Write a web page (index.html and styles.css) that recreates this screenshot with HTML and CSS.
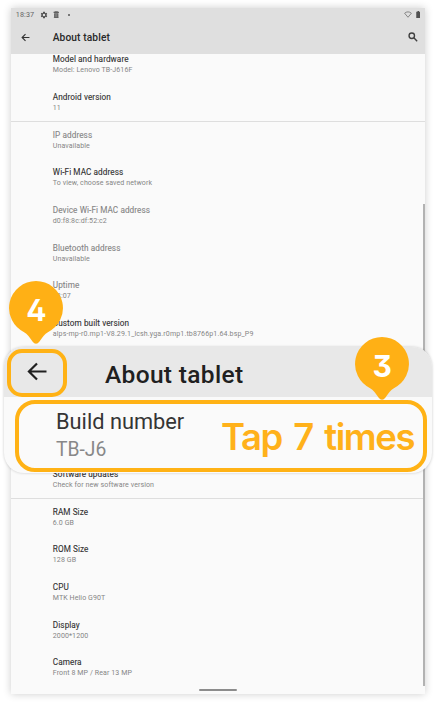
FILE: index.html
```html
<!DOCTYPE html>
<html lang="en">
<head>
<meta charset="utf-8">
<title>About tablet</title>
<link rel="stylesheet" href="styles.css">
</head>
<body>
<main class="screen">
  <header class="top">
    <div class="status">
      <span class="time">18:37</span>
      <svg class="gear" viewBox="0 0 24 24"><path fill-rule="evenodd" d="M19.4 13a7.500 7.500 0 0 0 0-2l2.300-1.700-2.200-3.800-2.700 1a7.500 7.500 0 0 0-1.700-1L14.700 2.500H9.300l-.4 3a7.500 7.500 0 0 0-1.700 1l-2.700-1-2.200 3.800L4.600 11a7.500 7.500 0 0 0 0 2l-2.300 1.700 2.200 3.800 2.700-1a7.500 7.500 0 0 0 1.700 1l.4 3h5.400l.4-3a7.500 7.500 0 0 0 1.700-1l2.700 1 2.200-3.800zM12 15.700a3.700 3.700 0 1 1 0-7.400 3.700 3.700 0 0 1 0 7.400z"/></svg>
      <svg class="sim" viewBox="0 0 12 14"><path d="M1 1.500h2V.5h6v1h2v2H1zM2 4h8v8.500h1V14H1v-1.500h1z"/><path class="slots" d="M4 6.500h4M4 8.500h4M4 10.500h4"/></svg>
      <i class="dot"></i>
      <svg class="wifi" viewBox="0 0 16 14"><path d="M1.200 4.500C5 .8 11 .8 14.800 4.500L8 12.500z"/></svg>
      <svg class="battery" viewBox="0 0 8 14"><path d="M2.500 0h3v1.500H8V14H0V1.500h2.500z"/></svg>
    </div>
    <div class="bar">
      <svg class="back" viewBox="0 0 16 16"><path d="M15 8H2M8 2L2 8l6 6"/></svg>
      <h1>About tablet</h1>
      <svg class="search" viewBox="0 0 18 18"><circle cx="6.800" cy="6.800" r="4.900"/><path d="M10.500 10.500l6 6"/></svg>
    </div>
  </header>
  <section class="list">
    <div class="row"><b>Model and hardware</b><span>Model: Lenovo TB-J616F</span></div>
    <div class="row"><b>Android version</b><span>11</span></div>
    <div class="row off line"><b>IP address</b><span>Unavailable</span></div>
    <div class="row"><b>Wi-Fi MAC address</b><span>To view, choose saved network</span></div>
    <div class="row off"><b>Device Wi-Fi MAC address</b><span>d0:f8:8c:df:52:c2</span></div>
    <div class="row off"><b>Bluetooth address</b><span>Unavailable</span></div>
    <div class="row off"><b>Uptime</b><span>03:07</span></div>
    <div class="row"><b>Custom built version</b><span class="long">alps-mp-r0.mp1-V8.29.1_lcsh.yga.r0mp1.tb8766p1.64.bsp_P9</span></div>
    <div class="row after"><b>Software updates</b><span>Check for new software version</span></div>
    <div class="row line"><b>RAM Size</b><span>6.0 GB</span></div>
    <div class="row"><b>ROM Size</b><span>128 GB</span></div>
    <div class="row"><b>CPU</b><span>MTK Helio G90T</span></div>
    <div class="row"><b>Display</b><span>2000*1200</span></div>
    <div class="row"><b>Camera</b><span>Front 8 MP / Rear 13 MP</span></div>
  </section>
  <i class="scroll"></i>
  <i class="home"></i>
</main>
<aside class="callout">
  <div class="chead">
    <div class="key"><svg viewBox="0 0 21 20"><path d="M20.500 10H2M10.500 1.500L2 10l8.500 8.500"/></svg></div>
    <h2>About tablet</h2>
  </div>
  <div class="cbody">
    <div class="names"><strong>Build number</strong><span>TB-J6</span></div>
    <div class="tap">Tap 7 times</div>
  </div>
</aside>
<div class="pin four"><svg viewBox="0 0 54 64"><path d="M27 0a27 27 0 0 1 11.500 51.400Q35 53.500 30.500 60.500Q27 65 23.500 60.500Q19 53.500 15.500 51.400A27 27 0 0 1 27 0z"/></svg><span>4</span></div>
<div class="pin three"><svg viewBox="0 0 54 64"><path d="M27 0a27 27 0 0 1 11.500 51.400Q35 53.500 30.500 60.500Q27 65 23.500 60.500Q19 53.500 15.500 51.400A27 27 0 0 1 27 0z"/></svg><span>3</span></div>
</body>
</html>
```
FILE: styles.css
```css
* { box-sizing: border-box; }
body { margin: 0; width: 436px; height: 712px; overflow: hidden; position: relative; background: #fff; font-family: Roboto, sans-serif; }
h1, h2 { margin: 0; font-weight: 500; white-space: nowrap; }
svg { display: block; flex: none; }
.screen { position: relative; margin: 8px 0 0 11.300px; width: 414px; height: 686px; background: #fafafa; box-shadow: 0 0 8px rgba(0,0,0,.2); }
.top { height: 46px; background: #dfdfdf; }
.status { height: 13px; display: flex; align-items: center; padding: 0 5px 0 4.500px; }
.time { font-size: 7.200px; color: #666; width: 24px; letter-spacing: .1px; }
.gear { width: 8px; height: 8px; fill: #505050; margin-left: .7px; }
.sim { width: 6.500px; height: 7.500px; fill: #606060; margin-left: 5px; }
.slots { stroke: #aaa; stroke-width: .8; }
.dot { width: 2px; height: 2px; border-radius: 50%; background: #555; margin-left: 8px; }
.wifi { width: 8px; height: 7px; fill: none; stroke: #777; stroke-width: 1.700; margin-left: auto; }
.battery { width: 4.500px; height: 7px; fill: #505050; margin-left: 3.500px; }
.bar { height: 32px; display: flex; align-items: center; padding: 0 7.500px 0 10.200px; }
.back { width: 9px; height: 9px; fill: none; stroke: #333; stroke-width: 2; }
.bar h1 { font-size: 10.200px; letter-spacing: .12px; color: #282828; margin-left: 22.200px; }
.search { width: 10px; height: 10px; margin-left: auto; fill: none; stroke: #404040; stroke-width: 2.500; }
.list { margin-top: -8.700px; }
.row { height: 37.700px; padding: 8px 0 0 41.500px; border-top: 1px solid transparent; white-space: nowrap; display: flex; flex-direction: column; }
.row.line { border-top-color: #dedede; }
.row b { font-size: 8.200px; line-height: 11px; font-weight: 400; letter-spacing: .08px; color: #303030; -webkit-text-stroke: .1px currentColor; }
.row span { font-size: 7.050px; line-height: 10.300px; letter-spacing: .09px; color: #858585; }
.row .long { letter-spacing: .13px; }
.row.off b { color: #858585; }
.row.after { margin-top: 113.100px; }
.scroll { position: absolute; right: 0; top: 196px; width: 2.500px; height: 482px; background: #b2b2b2; }
.home { position: absolute; left: 188px; bottom: 3px; width: 38px; height: 2px; background: #8c8c8c; border-radius: 1px; }
.callout { position: absolute; left: 3.500px; top: 347px; width: 428px; height: 126px; border-radius: 20px; background: #fafafa; box-shadow: 0 0 3px rgba(0,0,0,.2); }
.chead { height: 50px; padding: 1.500px 0 0 3.500px; border-radius: 20px 20px 0 0; background: #e8e8e8; display: flex; }
.key { width: 60px; height: 48px; border: 4px solid #ffb215; border-radius: 15px; display: flex; align-items: center; justify-content: center; flex: none; }
.key svg { width: 20px; height: 19px; fill: none; stroke: #202020; stroke-width: 2.300; margin-top: -2px; }
.chead h2 { font-size: 24.500px; line-height: 30px; letter-spacing: .33px; color: #202020; margin: 11px 0 0 38px; }
.cbody { margin: 2.500px 0 0 11.500px; width: 412px; height: 72px; border: 4px solid #ffb215; border-radius: 20px; display: flex; }
.names { display: flex; flex-direction: column; padding: 4px 0 0 37px; width: 202px; white-space: nowrap; }
.names strong { font-size: 21.800px; line-height: 28px; font-weight: 400; color: #353535; }
.names span { font-size: 19.300px; line-height: 28px; color: #888; }
.tap { font-family: Inter, sans-serif; font-weight: 560; font-size: 36.500px; line-height: 67px; color: #ffb11a; white-space: nowrap; letter-spacing: -1.400px; word-spacing: 3.500px; }
.pin { position: absolute; width: 54px; height: 64px; }
.pin svg { width: 54px; height: 64px; fill: #ffb015; }
.pin span { position: absolute; left: 0; top: 2px; width: 54px; text-align: center; font: 700 30px/54px Inter, sans-serif; color: #fff; font-feature-settings: "cv02", "cv09"; }
.four { left: 9.300px; top: 281px; }
.three { left: 355.300px; top: 337px; }
```
